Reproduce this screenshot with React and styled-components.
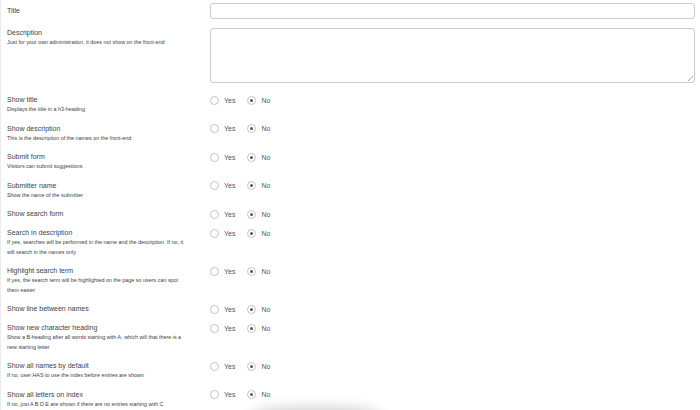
import React from 'react';
import styled, { createGlobalStyle } from 'styled-components';

const Global = createGlobalStyle`
  body { margin: 0; background: #fff; font-family: "Liberation Sans", Arial, sans-serif; overflow: hidden; }
`;

const Page = styled.div`
  position: relative;
  width: 700px;
  height: 410px;
  padding: 3px 5px 0 6px;
  box-sizing: border-box;
  border-left: 1px solid #ececec;
`;

const Row = styled.div`
  display: grid;
  grid-template-columns: 203px 1fr;
  padding-bottom: ${p => p.$pb ?? 9}px;
`;

const Label = styled.div`
  font-size: 7px;
  line-height: 10px;
  color: #3c434a;
`;

const Desc = styled.div`
  font-size: 5.4px;
  line-height: 9.5px;
  color: #3c434a;
  max-width: 198px;
`;

const Input = styled.div`
  height: 16px;
  border: 1px solid #c9ccd0;
  border-radius: 3px;
  box-sizing: border-box;
`;

const TextArea = styled(Input)`
  height: 55px;
  position: relative;
`;

const Grip = styled.div`
  position: absolute;
  right: 1px;
  bottom: 1px;
  width: 5px;
  height: 5px;
  background: linear-gradient(135deg, transparent 45%, #aaa 46%, #aaa 54%, transparent 55%, transparent 70%, #aaa 71%, #aaa 79%, transparent 80%);
`;

const Radios = styled.div`
  display: flex;
  align-items: center;
  height: 10px;
  font-size: 7px;
  color: #50575e;
`;

const Circle = styled.span`
  width: 9px;
  height: 9px;
  border: 1px solid #c3c4c7;
  border-radius: 50%;
  box-sizing: border-box;
  display: inline-flex;
  align-items: center;
  justify-content: center;
  margin-right: 5px;
  &::after {
    content: '';
    width: 3px;
    height: 3px;
    border-radius: 50%;
    background: ${p => (p.$on ? '#50575e' : 'transparent')};
  }
`;

const Opt = styled.span`
  margin-right: 12px;
`;

const Shadow = styled.div`
  position: absolute;
  left: 250px;
  bottom: -14px;
  width: 130px;
  height: 18px;
  border-radius: 50%;
  background: #d6d6d6;
  filter: blur(6px);
`;

const rows = [
  ['Show title', ['Displays the title in a h3-heading']],
  ['Show description', ['This is the description of the names on the front-end']],
  ['Submit form', ['Visitors can submit suggestions']],
  ['Submitter name', ['Show the name of the submitter']],
  ['Show search form', []],
  ['Search in description', ['If yes, searches will be performed in the name and the description. If no, it', 'will search in the names only']],
  ['Highlight search term', ['If yes, the search term will be highlighted on the page so users can spot', 'them easier']],
  ['Show line between names', []],
  ['Show new character heading', ['Show a B-heading after all words starting with A, which will that there is a', 'new starting letter']],
  ['Show all names by default', ['If no, user HAS to use the index before entries are shown']],
  ['Show all letters on index', ['If no, just A B D E are shown if there are no entries starting with C']],
];

export default function App() {
  return (
    <Page>
      <Global />
      <Row $pb={9}>
        <Label style={{ paddingTop: 3 }}>Title</Label>
        <Input />
      </Row>
      <Row $pb={12}>
        <div>
          <Label style={{ paddingTop: 0 }}>Description</Label>
          <Desc>Just for your own administration, it does not show on the front-end</Desc>
        </div>
        <TextArea><Grip /></TextArea>
      </Row>
      {rows.map(([label, desc]) => (
        <Row key={label}>
          <div>
            <Label>{label}</Label>
            {desc.map(d => <Desc key={d}>{d}</Desc>)}
          </div>
          <Radios>
            <Circle /><Opt>Yes</Opt>
            <Circle $on /><span>No</span>
          </Radios>
        </Row>
      ))}
      <Shadow />
    </Page>
  );
}
